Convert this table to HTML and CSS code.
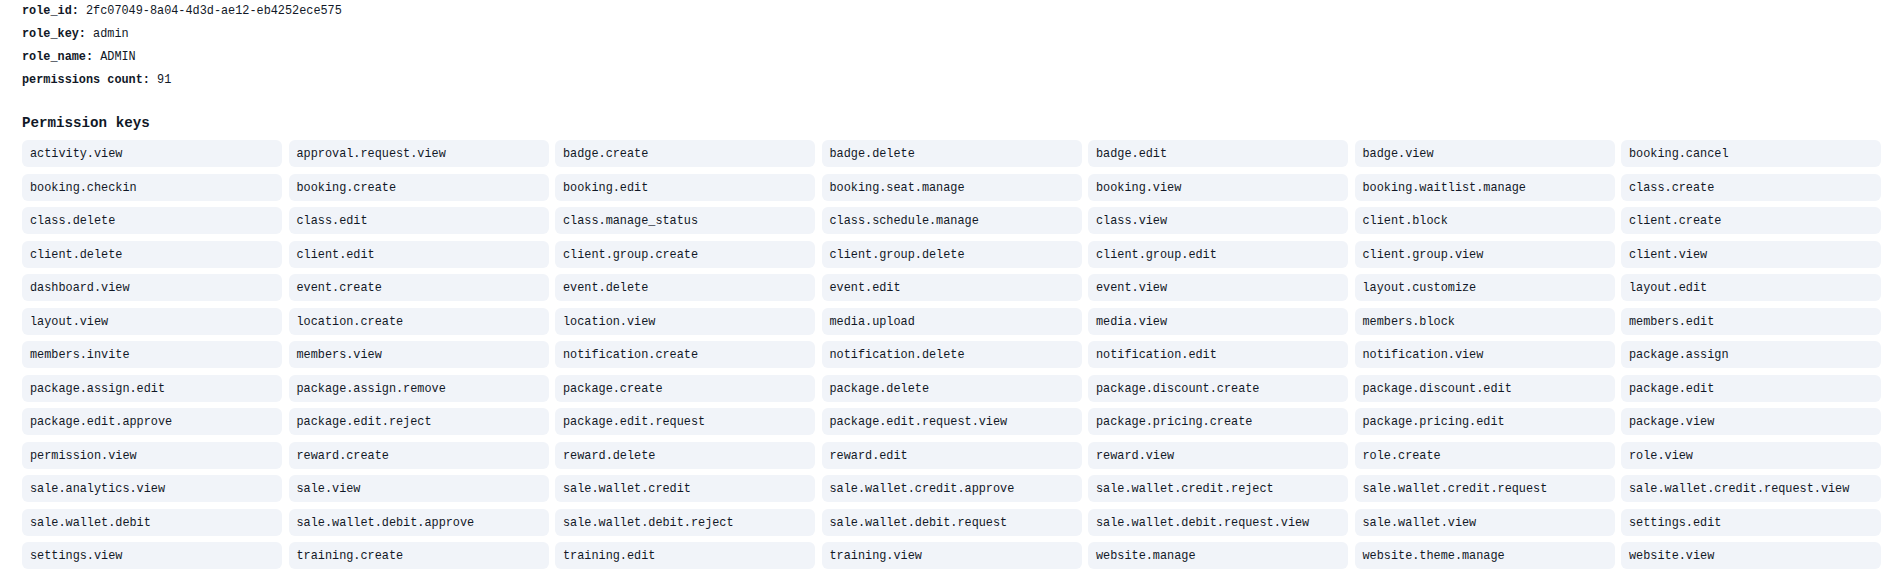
FILE: index.html
```html
<!DOCTYPE html>
<html>
<head>
<meta charset="utf-8">
<link rel="stylesheet" href="styles.css">
</head>
<body>
<div class="page">
  <div class="meta">
    <div class="line"><span class="label">role_id:</span> 2fc07049-8a04-4d3d-ae12-eb4252ece575</div>
    <div class="line"><span class="label">role_key:</span> admin</div>
    <div class="line"><span class="label">role_name:</span> ADMIN</div>
    <div class="line"><span class="label">permissions count:</span> 91</div>
  </div>
  <h3 class="heading">Permission keys</h3>
  <div class="grid">
    <div class="cell">activity.view</div>
    <div class="cell">approval.request.view</div>
    <div class="cell">badge.create</div>
    <div class="cell">badge.delete</div>
    <div class="cell">badge.edit</div>
    <div class="cell">badge.view</div>
    <div class="cell">booking.cancel</div>
    <div class="cell">booking.checkin</div>
    <div class="cell">booking.create</div>
    <div class="cell">booking.edit</div>
    <div class="cell">booking.seat.manage</div>
    <div class="cell">booking.view</div>
    <div class="cell">booking.waitlist.manage</div>
    <div class="cell">class.create</div>
    <div class="cell">class.delete</div>
    <div class="cell">class.edit</div>
    <div class="cell">class.manage_status</div>
    <div class="cell">class.schedule.manage</div>
    <div class="cell">class.view</div>
    <div class="cell">client.block</div>
    <div class="cell">client.create</div>
    <div class="cell">client.delete</div>
    <div class="cell">client.edit</div>
    <div class="cell">client.group.create</div>
    <div class="cell">client.group.delete</div>
    <div class="cell">client.group.edit</div>
    <div class="cell">client.group.view</div>
    <div class="cell">client.view</div>
    <div class="cell">dashboard.view</div>
    <div class="cell">event.create</div>
    <div class="cell">event.delete</div>
    <div class="cell">event.edit</div>
    <div class="cell">event.view</div>
    <div class="cell">layout.customize</div>
    <div class="cell">layout.edit</div>
    <div class="cell">layout.view</div>
    <div class="cell">location.create</div>
    <div class="cell">location.view</div>
    <div class="cell">media.upload</div>
    <div class="cell">media.view</div>
    <div class="cell">members.block</div>
    <div class="cell">members.edit</div>
    <div class="cell">members.invite</div>
    <div class="cell">members.view</div>
    <div class="cell">notification.create</div>
    <div class="cell">notification.delete</div>
    <div class="cell">notification.edit</div>
    <div class="cell">notification.view</div>
    <div class="cell">package.assign</div>
    <div class="cell">package.assign.edit</div>
    <div class="cell">package.assign.remove</div>
    <div class="cell">package.create</div>
    <div class="cell">package.delete</div>
    <div class="cell">package.discount.create</div>
    <div class="cell">package.discount.edit</div>
    <div class="cell">package.edit</div>
    <div class="cell">package.edit.approve</div>
    <div class="cell">package.edit.reject</div>
    <div class="cell">package.edit.request</div>
    <div class="cell">package.edit.request.view</div>
    <div class="cell">package.pricing.create</div>
    <div class="cell">package.pricing.edit</div>
    <div class="cell">package.view</div>
    <div class="cell">permission.view</div>
    <div class="cell">reward.create</div>
    <div class="cell">reward.delete</div>
    <div class="cell">reward.edit</div>
    <div class="cell">reward.view</div>
    <div class="cell">role.create</div>
    <div class="cell">role.view</div>
    <div class="cell">sale.analytics.view</div>
    <div class="cell">sale.view</div>
    <div class="cell">sale.wallet.credit</div>
    <div class="cell">sale.wallet.credit.approve</div>
    <div class="cell">sale.wallet.credit.reject</div>
    <div class="cell">sale.wallet.credit.request</div>
    <div class="cell">sale.wallet.credit.request.view</div>
    <div class="cell">sale.wallet.debit</div>
    <div class="cell">sale.wallet.debit.approve</div>
    <div class="cell">sale.wallet.debit.reject</div>
    <div class="cell">sale.wallet.debit.request</div>
    <div class="cell">sale.wallet.debit.request.view</div>
    <div class="cell">sale.wallet.view</div>
    <div class="cell">settings.edit</div>
    <div class="cell">settings.view</div>
    <div class="cell">training.create</div>
    <div class="cell">training.edit</div>
    <div class="cell">training.view</div>
    <div class="cell">website.manage</div>
    <div class="cell">website.theme.manage</div>
    <div class="cell">website.view</div>
  </div>
</div>
</body>
</html>
```

FILE: styles.css
```css
html, body {
  margin: 0;
  padding: 0;
  background: #ffffff;
}

body {
  font-family: "Liberation Mono", "DejaVu Sans Mono", monospace;
  color: #111827;
}

.page {
  padding: 0 21px 0 22px;
}

.meta .line {
  font-size: 11.85px;
  line-height: 23px;
}

.label {
  font-weight: bold;
}

.heading {
  margin: 21px 0 7px 0;
  font-size: 14.2px;
  line-height: 20px;
  font-weight: bold;
}

.grid {
  display: grid;
  grid-template-columns: repeat(7, 1fr);
  column-gap: 6.5px;
  row-gap: 6.5px;
}

.cell {
  height: 27px;
  line-height: 28px;
  padding: 0 8px;
  background: #f1f4f9;
  border-radius: 6px;
  font-size: 11.85px;
  white-space: nowrap;
  overflow: hidden;
}
```
